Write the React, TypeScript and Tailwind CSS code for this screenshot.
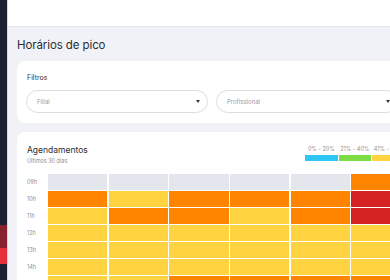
const G = "bg-[#e3e6ed]";
const O = "bg-[#ff8500]";
const Y = "bg-[#ffd33f]";
const R = "bg-[#d42222]";

const rows: { label: string; cells: string[] }[] = [
  { label: "09h", cells: [G, G, G, G, G, O, O] },
  { label: "10h", cells: [O, Y, O, O, O, R, O] },
  { label: "11h", cells: [Y, O, O, Y, O, R, O] },
  { label: "12h", cells: [Y, Y, Y, Y, Y, Y, Y] },
  { label: "13h", cells: [Y, Y, Y, Y, Y, Y, Y] },
  { label: "14h", cells: [Y, Y, Y, Y, Y, Y, Y] },
  { label: "15h", cells: [Y, Y, O, O, O, O, O] },
];

const legend = [
  { label: "0% - 20%", color: "bg-[#2ec6f4]" },
  { label: "21% - 40%", color: "bg-[#7ddb46]" },
  { label: "41% - 60%", color: "bg-[#ffd33f]" },
  { label: "61% - 80%", color: "bg-[#ff8500]" },
  { label: "81% - 100%", color: "bg-[#d42222]" },
];

function Select({ placeholder }: { placeholder: string }) {
  return (
    <div className="w-[182px] h-[23px] shrink-0 rounded-full border border-[#dcdde2] bg-white flex items-center justify-between pl-[10px] pr-[7px]">
      <span className="text-[6px] text-[#9a9ca3]">{placeholder}</span>
      <span className="w-0 h-0 border-l-[2.5px] border-r-[2.5px] border-t-[3px] border-l-transparent border-r-transparent border-t-[#333]" />
    </div>
  );
}

export default function App() {
  return (
    <div className="flex w-[390px] h-[280px] overflow-hidden bg-[#f1f2f7] font-['Inter',sans-serif]">
      <aside className="w-[7px] shrink-0 bg-[#1d2030] flex flex-col">
        <div className="h-[225px]" />
        <div className="h-[23px] bg-[#86222f]" />
        <div className="h-[16px] bg-[#e5303b]" />
      </aside>
      <main className="flex-1 min-w-0 border-l border-[#d5d7de]">
        <header className="h-[27px] bg-white border-b border-[#e6e7ec]" />
        <div className="pl-[9px] w-[460px]">
          <h1 className="mt-[8px] h-[20px] leading-[20px] text-[11.5px] tracking-[-0.1px] text-[#2c2d33]">
            Horários de pico
          </h1>
          <section className="mt-[6px] bg-white rounded-[8px] pt-[12px] pb-[10px] pl-[9px]">
            <div className="h-[10px] leading-[10px] text-[7px] text-[#333] pl-[1px]">Filtros</div>
            <div className="mt-[7px] flex gap-[8px]">
              <Select placeholder="Filial" />
              <Select placeholder="Profissional" />
            </div>
          </section>
          <section className="mt-[9px] bg-white rounded-[8px] pt-[12px] pl-[10px] h-[200px]">
            <div className="flex">
              <div className="w-[278px] shrink-0">
                <div className="h-[13px] leading-[13px] text-[8.5px] text-[#2c2d33]">Agendamentos</div>
                <div className="h-[9px] leading-[9px] text-[5.5px] text-[#8d8f96]">
                  Últimos 30 dias
                </div>
              </div>
              <div className="flex gap-[1px] mt-[1px]">
                {legend.map((l) => (
                  <div key={l.label} className="w-[32.5px] flex flex-col items-center">
                    <span className="h-[9px] leading-[9px] text-[5.5px] text-[#8d8f96] whitespace-nowrap">
                      {l.label}
                    </span>
                    <span className={`mt-[1px] w-full h-[6px] ${l.color}`} />
                  </div>
                ))}
              </div>
            </div>
            <div className="mt-[8px] flex flex-col gap-[1.5px]">
              {rows.map((r) => (
                <div key={r.label} className="flex items-center h-[15.5px]">
                  <span className="w-[21px] shrink-0 text-[5.5px] text-[#8d8f96]">{r.label}</span>
                  <div className="flex gap-[1.5px]">
                    {r.cells.map((c, i) => (
                      <div key={i} className={`w-[59.2px] h-[15.5px] ${c}`} />
                    ))}
                  </div>
                </div>
              ))}
            </div>
          </section>
        </div>
      </main>
    </div>
  );
}
